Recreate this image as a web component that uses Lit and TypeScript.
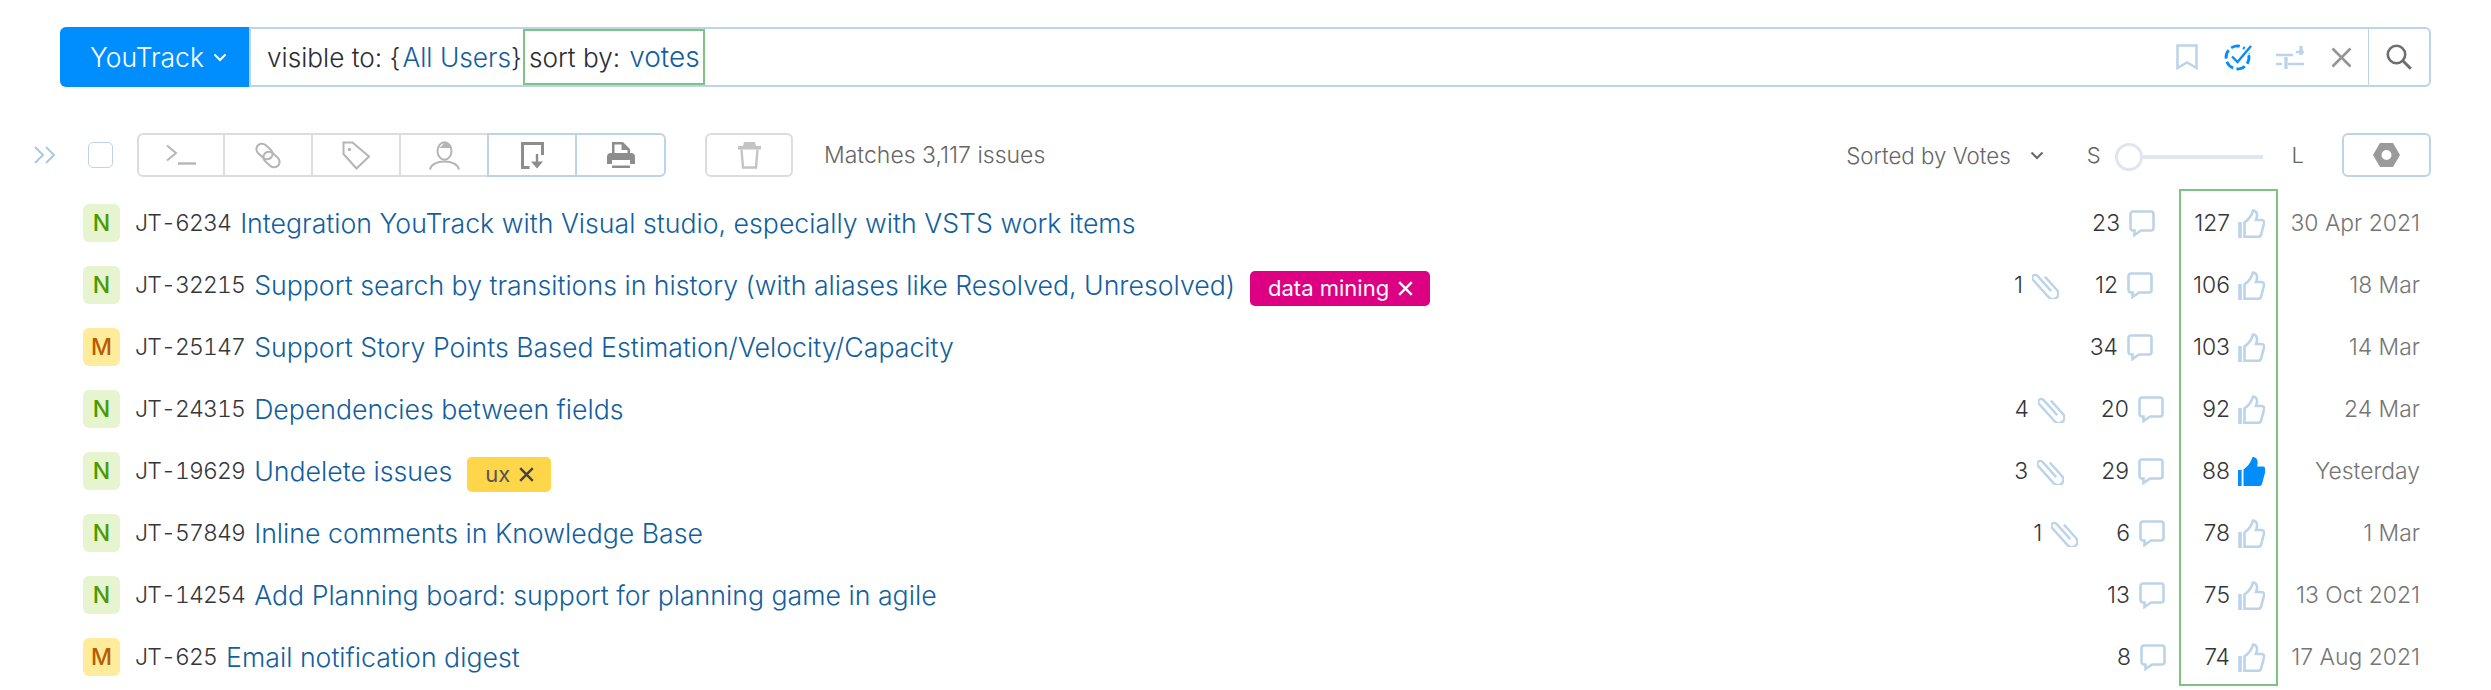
import { LitElement, html, css, svg } from "lit";
import { customElement } from "lit/decorators.js";

interface Row { state: string; id: string; title: string; tag?: string; tagKind?: string; att?: number; attGap?: number; com: number; comGap: number; votes: number; voted?: boolean; date: string; }

const rows: Row[] = [
  { state: "N", id: "JT-6234", title: "Integration YouTrack with Visual studio, especially with VSTS work items", com: 23, comGap: 23, votes: 127, date: "30 Apr 2021" },
  { state: "N", id: "JT-32215", title: "Support search by transitions in history (with aliases like Resolved, Unresolved)", tag: "data mining", tagKind: "pink", att: 1, attGap: 36, com: 12, comGap: 25, votes: 106, date: "18 Mar" },
  { state: "M", id: "JT-25147", title: "Support Story Points Based Estimation/Velocity/Capacity", com: 34, comGap: 25, votes: 103, date: "14 Mar" },
  { state: "N", id: "JT-24315", title: "Dependencies between fields", att: 4, attGap: 36, com: 20, comGap: 14, votes: 92, date: "24 Mar" },
  { state: "N", id: "JT-19629", title: "Undelete issues", tag: "ux", tagKind: "yellow", att: 3, attGap: 37, com: 29, comGap: 14, votes: 88, voted: true, date: "Yesterday" },
  { state: "N", id: "JT-57849", title: "Inline comments in Knowledge Base", att: 1, attGap: 38, com: 6, comGap: 13, votes: 78, date: "1 Mar" },
  { state: "N", id: "JT-14254", title: "Add Planning board: support for planning game in agile", com: 13, comGap: 13, votes: 75, date: "13 Oct 2021" },
  { state: "M", id: "JT-625", title: "Email notification digest", com: 8, comGap: 12, votes: 74, date: "17 Aug 2021" },
];

const I = (w: number, h: number, body: unknown, cls = "") =>
  html`<svg class=${cls} width=${w} height=${h} viewBox="0 0 ${w} ${h}" fill="none" aria-hidden="true">${body}</svg>`;

const icons = {
  chev: I(14, 9, svg`<path d="M1.500 1.500 7 7l5.500-5.500" stroke="currentColor" stroke-width="2"/>`),
  x: I(15, 15, svg`<path d="M1.200 1.200l12.600 12.600M13.800 1.200 1.200 13.800" stroke="currentColor" stroke-width="2.400"/>`),
  bookmark: I(22, 26, svg`<path d="M1.500 1.500h19v22.500L11 18.500 1.500 24z" stroke="#bcd4e9" stroke-width="2.500"/>`),
  check: I(28, 27, svg`<circle cx="13.500" cy="13.500" r="11.500" stroke="#008eff" stroke-width="2.800" stroke-dasharray="9 3.400" transform="rotate(-12 13.500 13.500)"/><path d="M8 12.500 13.500 18 27 2" stroke="#fff" stroke-width="6.500"/><path d="M8 12.500 13.500 18 27 2" stroke="#008eff" stroke-width="2.400"/>`),
  filter: I(28, 23, svg`<path d="M0 9h17M20 6h8M0 18h6M12 18h16" stroke="#bcd4e9" stroke-width="2.600"/><path d="M25 0v9M10 11v12" stroke="#bcd4e9" stroke-width="3.400"/>`),
  close: I(21, 21, svg`<path d="M1.500 1.500 19.500 19.500M19.500 1.500 1.500 19.500" stroke="#959595" stroke-width="2.600"/>`),
  search: I(26, 26, svg`<circle cx="10.500" cy="10.500" r="8.700" stroke="#6e6e6e" stroke-width="2.600"/><path d="m16.800 16.800 8 8" stroke="#6e6e6e" stroke-width="3"/>`),
  double: I(22, 18, svg`<path d="M1 1l8 8-8 8M12 1l8 8-8 8" stroke="#a9c8e4" stroke-width="2"/>`),
  cmd: I(30, 22, svg`<path d="M1 1.500 10 9l-9 7.500" stroke="#b5b5b5" stroke-width="2"/><path d="M12 19.500h18" stroke="#b5b5b5" stroke-width="2.400"/>`),
  link: I(28, 27, svg`<rect x="1.500" y="4" width="18" height="11" rx="5.500" transform="rotate(42 10.500 9.500)" stroke="#b5b5b5" stroke-width="2"/><rect x="8.500" y="12" width="18" height="11" rx="5.500" transform="rotate(42 17.500 17.500)" stroke="#b5b5b5" stroke-width="2"/>`),
  tag: I(28, 29, svg`<path d="M1.500 1.500h9L27 15.500 14.500 27.500 1.500 13z" stroke="#b5b5b5" stroke-width="2"/><circle cx="7.500" cy="8.500" r="1.700" fill="#b5b5b5"/>`),
  user: I(31, 29, svg`<ellipse cx="15.500" cy="10" rx="7" ry="8.700" stroke="#b5b5b5" stroke-width="2"/><path d="M8.500 7c3-.5 5-2 6.500-6 3 .2 7 1.500 7.500 6" fill="#b5b5b5"/><path d="M1 28.500c1-5 7-8 14.500-8s13.500 3 14.500 8" stroke="#b5b5b5" stroke-width="2"/>`),
  exportI: I(23, 27, svg`<path d="M21.500 13V1.500h-20v24h7" stroke="#8d8d8d" stroke-width="3"/><path d="M16 12v12" stroke="#8d8d8d" stroke-width="2.400"/><path d="M10 19.500l6 7 6-7z" fill="#8d8d8d"/>`),
  print: I(28, 26, svg`<path fill-rule="evenodd" clip-rule="evenodd" d="M5 0h11l7 7v4h1a4 4 0 0 1 4 4v7h-5v4H5v-4H0v-7a4 4 0 0 1 4-4h1zm2.500 2.500V11h13V8h-6V2.500zM5 18v5.500h18V18z" fill="#8d8d8d"/>`),
  trash: I(23, 27, svg`<path d="M3.500 7.500 5 25.500h13L19.500 7.500" stroke="#c4c4c4" stroke-width="2.400"/><path d="M0 4h23v3.500H0z" fill="#c4c4c4"/><path d="M6 0h11l1 4H5z" fill="#c4c4c4"/>`),
  nut: I(27, 24, svg`<path fill-rule="evenodd" clip-rule="evenodd" d="M7 0h13l7 12-7 12H7L0 12zm6.500 7a5 5 0 1 0 0 10 5 5 0 0 0 0-10z" fill="#9a9a9a"/>`),
  comment: I(26, 27, svg`<path d="M4 1.500h18a2.500 2.500 0 0 1 2.500 2.500v14a2.500 2.500 0 0 1-2.500 2.500H12L5.500 25v-4.500H4A2.500 2.500 0 0 1 1.500 18V4A2.500 2.500 0 0 1 4 1.500z" stroke="#bcd4e9" stroke-width="2.600"/>`),
  clip: I(27, 27, svg`<g transform="translate(13.500 13.500) rotate(-42)"><path d="M.5 8V-12.500a3 3 0 0 0-6 0V11a5.500 5.500 0 0 0 11 0V-7" stroke="#bcd4e9" stroke-width="2.400"/></g>`),
  thumb: I(27, 29, svg`<path d="M2 13v16" stroke="#bcd4e9" stroke-width="3.600"/><path d="M6.500 13.500c4-3 7.500-7 8.500-12 4 0 5 4.500 3 9.500h5.500c2.300 0 3 1.800 2.500 3.500L23 26c-.5 1.500-1.500 1.800-3 1.800H6.500z" stroke="#bcd4e9" stroke-width="2.600"/>`),
  thumbOn: I(27, 29, svg`<path d="M0 13h3.600v16H0z" fill="#008eff"/><path d="M5.500 12.500c4-3 7.500-7 9-12.500 5 0 6 4.500 4.500 9.500h5.500c2.500 0 3.500 2 3 4.500L24 27c-.5 1.500-1.500 2-3 2H5.500z" fill="#008eff"/>`),
};

@customElement("app-root")
export class AppRoot extends LitElement {
  static styles = css`
    :host { display: block; width: 2491px; height: 690px; background: #fff; font-family: Inter, "Noto Sans", sans-serif; font-weight: 300; color: #2a2d31; overflow: hidden; position: relative; }
    .search { display: flex; height: 60px; margin: 27px 60px 0 60px; font-size: 26.200px; }
    .brand { width: 189px; background: #008eff; color: #fff; border-radius: 6px 0 0 6px; display: flex; align-items: center; justify-content: center; gap: 9px; font-size: 26.500px; box-sizing: border-box; padding-left: 8px; }
    .field { flex: 1; border: solid #bcd4e9; border-width: 2px 0 2px 2px; display: flex; align-items: center; min-width: 0; padding-left: 16px; }
    .blue { color: #135f9e; font-size: 26.300px; margin-left: 2px; }
    .hl .blue { margin-left: 9px; font-size: 28px; }
    .hl { border: 2px solid #7dc383; height: 56px; width: 182px; box-sizing: border-box; display: flex; align-items: center; padding: 0 0 0 4px; margin-left: 1px; white-space: pre; }
    .tools { margin-left: auto; display: flex; align-items: center; }
    .tools svg, .tools span { display: block; }
    .go { width: 63px; border: 2px solid #bcd4e9; border-left-width: 1px; border-radius: 0 6px 6px 0; display: flex; align-items: center; justify-content: center; box-sizing: border-box; }
    .bar { display: flex; align-items: center; height: 44px; margin: 46px 60px 0 34px; color: #666; }
    .check { width: 25px; height: 26px; border: 1px solid #bcd4e9; border-radius: 5px; box-sizing: border-box; margin: 0 24px 0 32px; }
    .group { display: flex; height: 44px; }
    .bt { width: 88px; height: 44px; box-sizing: border-box; border: 2px solid #dcdcdc; border-left-width: 0; display: flex; align-items: center; justify-content: center; }
    .bt:first-child { border-left-width: 2px; border-radius: 6px 0 0 6px; }
    .bt.on { border-color: #bcd4e9; border-left-width: 2px; width: 90px; margin-left: -2px; }
    .bt.last { border-radius: 0 6px 6px 0; width: 91px; }
    .bt.solo { border-left-width: 2px; border-radius: 6px; margin-left: 39px; }
    .matches { margin-left: 31px; font-size: 23px; color: #666; }
    .sort { margin-left: auto; font-size: 22.300px; display: flex; align-items: center; gap: 19px; }
    .s { font-size: 22px; margin-left: 43px; }
    .thumb { width: 28px; height: 28px; border: 3px solid #e1e5ee; border-radius: 50%; box-sizing: border-box; margin-left: 14px; background: #fff; position: relative; top: 2px; }
    .track { width: 120px; height: 4px; background: #e1e5ee; position: relative; top: 2px; }
    .l { font-size: 22px; margin-left: 29px; }
    .cog { width: 89px; height: 44px; border: 2px solid #bcd4e9; border-radius: 6px; box-sizing: border-box; display: flex; align-items: center; justify-content: center; margin-left: 38px; }
    .list { margin: 15px 71px 0 83px; }
    .row { display: flex; align-items: center; height: 62px; white-space: nowrap; }
    .st { width: 37px; height: 38px; border-radius: 6px; display: flex; align-items: center; justify-content: center; font-size: 23px; font-weight: 500; }
    .st.N { background: #e6f5d0; color: #4c9a00; }
    .st.M { background: #ffeb9c; color: #b85c00; }
    .id { margin-left: 15px; font-size: 23px; color: #33363a; font-variant-numeric: tabular-nums; letter-spacing: -0.850px; }
    .title { margin-left: 9px; color: #135f9e; font-size: 26.700px; }
    .tag { margin-left: 15px; height: 35px; border-radius: 5px; display: inline-flex; align-items: center; gap: 9px; padding: 0 17px 0 18px; font-size: 22px; font-weight: 400; position: relative; top: 3px; }
    .tag svg { display: block; }
    .tag.pink { background: #dd0082; color: #fff; }
    .tag.yellow { background: #ffd54a; color: #555; }
    .tag.yellow svg { color: #444; }
    .sp { flex: 1; }
    .ct { display: flex; align-items: center; gap: 9px; font-size: 22.900px; color: #33363a; }
    .ct svg { display: block; }
    .votes { width: 87px; display: flex; justify-content: flex-end; align-items: center; gap: 8px; font-size: 22.900px; color: #33363a; }
    .votes svg { display: block; }
    .date { width: 155px; text-align: right; font-size: 22.900px; color: #757575; }
    .frame { position: absolute; left: 2179px; top: 189px; width: 99px; height: 497px; border: 2px solid #7dc383; box-sizing: border-box; pointer-events: none; }
    .m-26 { margin-right: 26px; }
    .m-24 { margin-right: 24px; }
    .m-27 { margin-right: 27px; }
    .m-16 { margin-right: 16px; }
  `;

  render() {
    return html`
      <div class="search">
        <div class="brand">YouTrack ${icons.chev}</div>
        <div class="field">
          <span>visible to: {<span class="blue">All Users</span>}</span>
          <span class="hl">sort by:<span class="blue">votes</span></span>
          <div class="tools">
            <span class="m-26">${icons.bookmark}</span>
            <span class="m-24">${icons.check}</span>
            <span class="m-27">${icons.filter}</span>
            <span class="m-16">${icons.close}</span>
          </div>
        </div>
        <div class="go">${icons.search}</div>
      </div>
      <div class="bar">
        ${icons.double}
        <div class="check"></div>
        <div class="group">
          <div class="bt">${icons.cmd}</div>
          <div class="bt">${icons.link}</div>
          <div class="bt">${icons.tag}</div>
          <div class="bt">${icons.user}</div>
          <div class="bt on">${icons.exportI}</div>
          <div class="bt on last">${icons.print}</div>
        </div>
        <div class="bt solo">${icons.trash}</div>
        <div class="matches">Matches 3,117 issues</div>
        <div class="sort">Sorted by Votes ${icons.chev}</div>
        <div class="s">S</div>
        <div class="thumb"></div>
        <div class="track"></div>
        <div class="l">L</div>
        <div class="cog">${icons.nut}</div>
      </div>
      <div class="list">
        ${rows.map((r) => html`
          <div class="row">
            <div class="st ${r.state}">${r.state}</div>
            <div class="id">${r.id}</div>
            <div class="title">${r.title}</div>
            ${r.tag ? html`<div class="tag ${r.tagKind}">${r.tag} ${icons.x}</div>` : ""}
            <div class="sp"></div>
            ${r.att ? html`<div class="ct" style="margin-right:${r.attGap}px">${r.att} ${icons.clip}</div>` : ""}
            <div class="ct" style="margin-right:${r.comGap}px">${r.com} ${icons.comment}</div>
            <div class="votes">${r.votes} ${r.voted ? icons.thumbOn : icons.thumb}</div>
            <div class="date">${r.date}</div>
          </div>
        `)}
      </div>
      <div class="frame"></div>
    `;
  }
}
